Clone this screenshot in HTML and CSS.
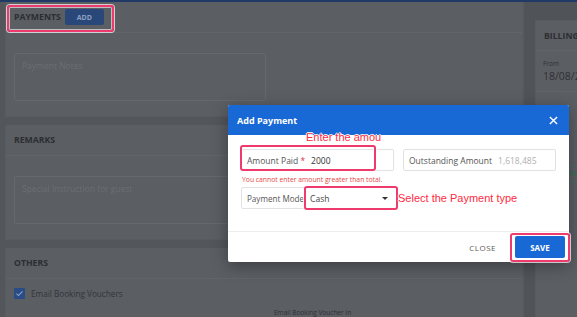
FILE: index.html
```html
<!DOCTYPE html>
<html lang="en">

<head>
  <meta charset="UTF-8" />
  <meta name="viewport" content="width=device-width, initial-scale=1.0" />
  <title>Add Payment</title>
  <link rel="stylesheet" href="styles.css">
</head>

<body>
  <div class="topbar"></div>
  <div class="page">
    <main class="main">
      <section class="card">
        <div class="card-head">
          <span class="card-title">Payments</span>
          <button class="btn-add">Add</button>
        </div>
        <div class="card-body">
          <div class="textarea">Payment Notes</div>
        </div>
      </section>
      <section class="card">
        <div class="card-head">
          <span class="card-title">Remarks</span>
        </div>
        <div class="card-body">
          <div class="textarea">Special Instruction for guest</div>
        </div>
      </section>
      <section class="card">
        <div class="card-head">
          <span class="card-title">Others</span>
        </div>
        <div class="card-body others">
          <label class="check-row">
            <span class="checkbox">
              <svg viewBox="0 0 12 12" width="9" height="9"><path d="M2 6.3l2.6 2.5L10 3.3" fill="none" stroke="#8ea6c9" stroke-width="1.4" /></svg>
            </span>
            Email Booking Vouchers
          </label>
          <div class="voucher-in">Email Booking Voucher In</div>
        </div>
      </section>
    </main>
    <aside class="side">
      <section class="card billing">
        <div class="card-head">
          <span class="card-title">Billing</span>
        </div>
        <div class="billing-body">
          <div class="small-label">From</div>
          <div class="date">18/08/2022</div>
        </div>
        <div class="billing-rows">
          <div class="bill-line">Check</div>
          <div class="bill-line second">Tari</div>
          <div class="bill-btn">CONFIRM</div>
        </div>
      </section>
    </aside>
  </div>

  <div class="modal">
    <div class="modal-head">
      <span class="modal-title">Add Payment</span>
      <svg class="modal-close" viewBox="0 0 10 10" width="9" height="9"><path d="M1 1L9 9M9 1L1 9" stroke="#fff" stroke-width="1.6" /></svg>
    </div>
    <div class="modal-body">
      <div class="field-row">
        <div class="field">
          <span class="field-label">Amount Paid <span class="req">*</span></span>
          <span class="field-value">2000</span>
        </div>
        <div class="field">
          <span class="field-label">Outstanding Amount</span>
          <span class="field-value muted">1,618,485</span>
        </div>
      </div>
      <div class="error">You cannot enter amount greater than total.</div>
      <div class="field mode">
        <span class="field-label">Payment Mode</span>
        <span class="select">Cash<span class="caret"></span></span>
      </div>
    </div>
    <div class="modal-foot">
      <button class="btn-close">Close</button>
      <button class="btn-save">Save</button>
    </div>
  </div>

  <!-- tutorial marks drawn over the screenshot -->
  <div class="mark mark-payments"></div>
  <div class="mark mark-amount"></div>
  <div class="mark mark-mode"></div>
  <div class="mark mark-save"></div>
  <div class="note note-amount">Enter the amou</div>
  <div class="note note-mode">Select the Payment type</div>
</body>

</html>
```

FILE: styles.css
```css
body {
  font-family: "Open Sans", sans-serif;
  background-color: #53565b;
  margin: 0;
  padding: 0;
  overflow: hidden;
  height: 317px;
  color: #2b2e32;
}

.topbar {
  height: 2px;
  background-color: #1f3a66;
}

.page {
  display: flex;
}

.main {
  flex: none;
  width: 518px;
  padding-left: 5px;
  display: flex;
  flex-direction: column;
  gap: 8px;
}

.card {
  background-color: #5b5e63;
  border: 1px solid #585b60;
  border-top: none;
}

.card-head {
  height: 30px;
  display: flex;
  align-items: center;
  gap: 4px;
  padding: 0 8px;
  border-bottom: 1px solid #616469;
}

.card-title {
  font-size: 8.7px;
  font-weight: 700;
  text-transform: uppercase;
}

.btn-add {
  font-family: "Open Sans", sans-serif;
  font-size: 7px;
  font-weight: 700;
  text-transform: uppercase;
  color: #8ba1c3;
  background-color: #294879;
  border: none;
  border-radius: 2px;
  width: 39px;
  height: 16px;
  padding: 0;
}

.card-body {
  padding: 20px 8px 15px;
}

.textarea {
  width: 236px;
  height: 34px;
  border: 1px solid #65686c;
  border-radius: 2px;
  padding: 6px 7px;
  font-size: 8.5px;
  color: #6b6e72;
}

.card-body.others {
  padding: 9px 8px 0;
  height: 42px;
}

.check-row {
  display: flex;
  align-items: center;
  gap: 6px;
  height: 11px;
  font-size: 8.2px;
  color: #33363a;
}

.checkbox {
  width: 11px;
  height: 11px;
  border-radius: 1px;
  background-color: #2a4c84;
  display: flex;
  align-items: center;
  justify-content: center;
}

.voucher-in {
  margin: 9px 0 0 260px;
  font-size: 6.5px;
  color: #2e3135;
}

.side {
  flex: 1;
  min-width: 0;
  overflow: hidden;
  border-left: 1px solid #585b60;
  background-color: #505358;
  padding: 18px 0 0 11px;
  height: 299px;
}

.billing {
  border: 1px solid #585b60;
  border-right: none;
  height: 300px;
}

.billing .card-head {
  height: 29px;
}

.billing-body {
  padding: 8px 7px;
  border-bottom: 1px solid #616469;
  white-space: nowrap;
}

.small-label {
  font-size: 6.5px;
  color: #2e3135;
}

.date {
  font-size: 10.5px;
  color: #2e3135;
  margin-top: 1px;
}

.billing-rows {
  padding: 10px 0 0 8px;
  font-size: 9px;
  white-space: nowrap;
}

.bill-line.second {
  margin-top: 21px;
}

.bill-btn {
  margin-top: 16px;
  border: 1px solid #4e6b5e;
  color: #3f6b57;
  font-size: 7px;
  font-weight: 700;
  padding: 3px 6px;
  width: 40px;
}

/* modal */
.modal {
  position: absolute;
  left: 228px;
  top: 105px;
  width: 341px;
  background-color: #fff;
  border-radius: 2px;
  box-shadow: 0 4px 16px rgba(0, 0, 0, 0.35);
}

.modal-head {
  height: 30px;
  background-color: #1868d6;
  border-radius: 2px 2px 0 0;
  display: flex;
  align-items: center;
  justify-content: space-between;
  padding: 0 11px 0 9px;
}

.modal-title {
  color: #fff;
  font-size: 9px;
  font-weight: 700;
}

.modal-body {
  padding: 14px 13px 22px;
  border-bottom: 1px solid #eeeeee;
}

.field-row {
  display: flex;
  gap: 9px;
}

.field {
  flex: 1;
  height: 20px;
  border: 1px solid #e2e2e2;
  border-radius: 2px;
  display: flex;
  align-items: center;
  padding: 0 5px;
  gap: 6px;
  font-size: 8.5px;
}

.field-label {
  flex-shrink: 0;
  color: #555;
  white-space: nowrap;
}

.req {
  color: #e0333f;
}

.field-value {
  color: #333;
}

.field-value.muted {
  color: #b0b0b0;
}

.error {
  font-size: 6.8px;
  color: #e64545;
  margin: 4px 0 0 1px;
  height: 12px;
}

.field.mode {
  width: 146px;
  flex: none;
  gap: 0;
  padding-right: 4px;
}

.field.mode .field-label {
  font-size: 8.1px;
}

.select {
  flex: 1;
  display: flex;
  align-items: center;
  justify-content: space-between;
  padding-left: 6px;
  color: #444;
}

.caret {
  width: 0;
  height: 0;
  border-left: 3px solid transparent;
  border-right: 3px solid transparent;
  border-top: 3px solid #333;
  margin-right: 5px;
}

.modal-foot {
  height: 30px;
  display: flex;
  align-items: center;
  justify-content: flex-end;
  gap: 19px;
  padding-right: 4px;
}

.btn-close {
  font-family: "Open Sans", sans-serif;
  font-size: 8px;
  text-transform: uppercase;
  letter-spacing: 0.5px;
  color: #5c5c5c;
  background: none;
  border: none;
  padding: 0;
}

.btn-save {
  font-family: "Open Sans", sans-serif;
  font-size: 8px;
  font-weight: 700;
  text-transform: uppercase;
  color: #fff;
  background-color: #1868d6;
  border: none;
  border-radius: 2px;
  width: 50px;
  height: 22px;
  padding: 0;
}

/* annotation marks */
.mark {
  position: absolute;
  border: 2px solid #ef3a6e;
  border-radius: 3px;
  box-shadow: 0 0 0 1px rgba(255, 255, 255, 0.7), inset 0 0 0 1px rgba(255, 255, 255, 0.6);
}

.mark-payments {
  left: 7px;
  top: 5px;
  width: 103px;
  height: 23px;
}

.mark-amount {
  left: 240px;
  top: 145px;
  width: 132px;
  height: 22px;
}

.mark-mode {
  left: 304px;
  top: 186px;
  width: 90px;
  height: 20px;
}

.mark-save {
  left: 510px;
  top: 233px;
  width: 56px;
  height: 25px;
}

.note {
  position: absolute;
  font-family: "Liberation Sans", Arial, sans-serif;
  font-size: 11px;
  color: #ff2a3f;
  white-space: nowrap;
  text-shadow: 1px 0 0 #fff, -1px 0 0 #fff, 0 1px 0 #fff, 0 -1px 0 #fff;
}

.note-amount {
  left: 306px;
  top: 131px;
}

.note-mode {
  left: 398px;
  top: 192px;
}
```
